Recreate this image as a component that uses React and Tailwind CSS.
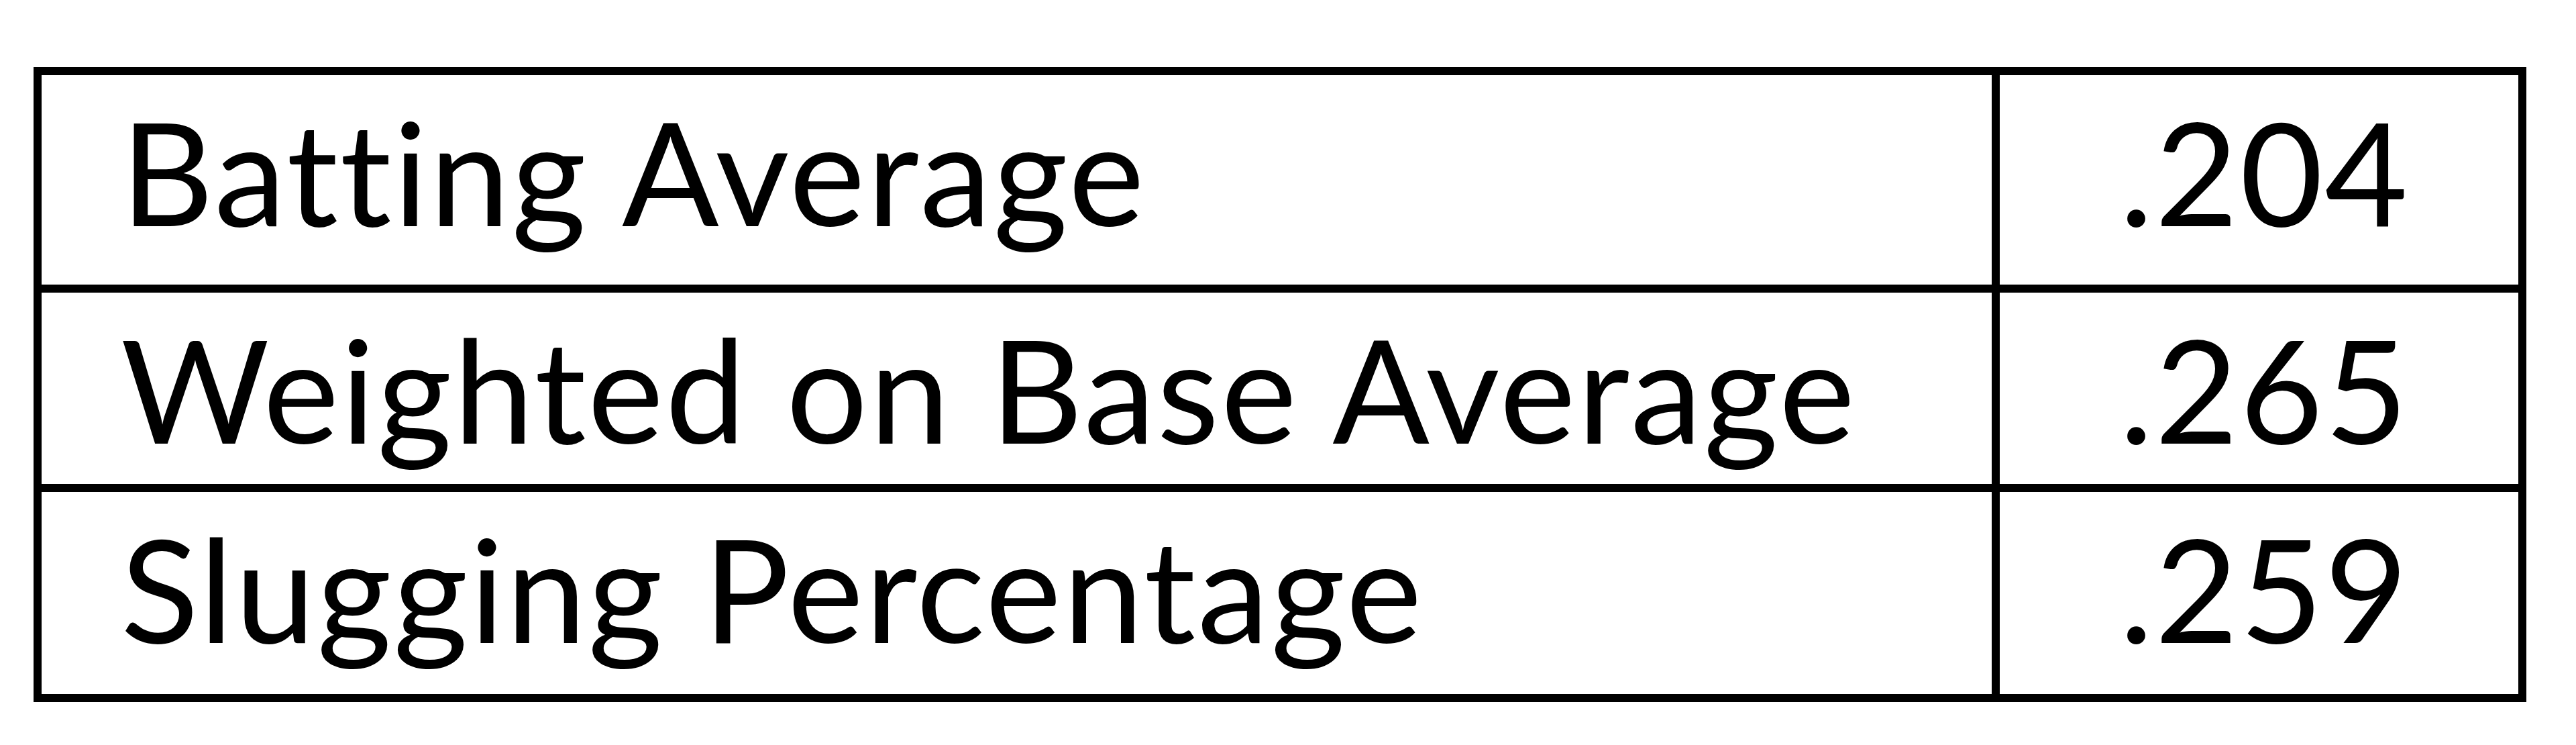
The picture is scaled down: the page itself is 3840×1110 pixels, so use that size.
const rows = [
  { label: "Batting Average", value: ".204", height: "h-[312px]" },
  { label: "Weighted on Base Average", value: ".265", height: "h-[297px]" },
  { label: "Slugging Percentage", value: ".259", height: "h-[313px]" },
];

export default function App() {
  return (
    <div className="min-h-[1110px] bg-white pl-[50px] pt-[100px] font-['Lato','Liberation_Sans',sans-serif] text-black [font-variant-ligatures:none]">
      <div className="w-[3716px] border-[12px] border-black">
        {rows.map((r, idx) => (
          <div
            key={r.label}
            className={`flex ${r.height} ${idx > 0 ? "border-t-[12px] border-black" : ""}`}
          >
            <div className="box-border w-[2919px] shrink-0 border-r-[12px] border-black pl-[118px] pt-[36px] text-[214px] leading-[214px] tracking-[2.8px]">
              {r.label}
            </div>
            <div className="flex-1 pr-[162px] pt-[36px] text-right text-[214px] leading-[214px] tracking-[2.5px]">
              {r.value}
            </div>
          </div>
        ))}
      </div>
    </div>
  );
}
